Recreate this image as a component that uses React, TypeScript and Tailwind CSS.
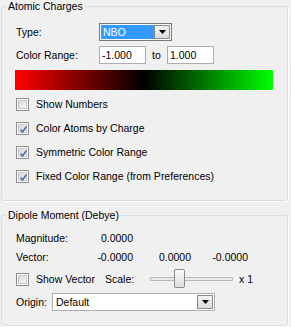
import React from "react";

const FONT = "font-['Liberation_Sans',Arial,sans-serif]";

const Arrow = () => (
  <svg width="7" height="4" viewBox="0 0 7 4">
    <path d="M0 0h7L3.5 4z" fill="#000" />
  </svg>
);

const DropButton = () => (
  <span className="w-[16px] h-full border border-[#8a8a8a] bg-[linear-gradient(#f2f2f2,#dcdcdc)] flex items-center justify-center shrink-0">
    <Arrow />
  </span>
);

const CheckBox = ({ checked }: { checked?: boolean }) => (
  <span className="w-[13px] h-[13px] border border-[#8e8f8f] bg-white p-[1px] shrink-0">
    <span className="block w-full h-full border border-[#c9c9c9] bg-[linear-gradient(135deg,#dadada,#f8f8f8)]">
      {checked && (
        <svg width="9" height="9" viewBox="0 0 9 9" className="block">
          <path d="M1.5 4.5 L3.5 7 L7.5 1.5" stroke="#4d6db5" strokeWidth="1.7" fill="none" />
        </svg>
      )}
    </span>
  </span>
);

const CheckRow = ({ label, checked }: { label: string; checked?: boolean }) => (
  <div className="h-[24px] flex items-center">
    <CheckBox checked={checked} />
    <span className="ml-[7px]">{label}</span>
  </div>
);

const TextBox = ({ value }: { value: string }) => (
  <div className="w-[47px] h-[18px] border border-[#abadb3] bg-white flex items-center px-[2px]">
    {value}
  </div>
);

export default function App() {
  return (
    <div className={`w-[291px] h-[327px] bg-[#f0f0f0] pl-[1px] text-[10.5px] leading-[13px] text-black ${FONT}`}>
      {/* Atomic Charges */}
      <fieldset className="block w-[287px] h-[201px] border border-[#d5dfe5] rounded-[3px] shadow-[1px_1px_0_#fff]">
        <legend className="ml-[5px] px-[1px] leading-[13px]">Atomic Charges</legend>
        <div className="flex flex-col pl-[14px]">
          <div className="mt-[10px] h-[18px] flex items-center">
            <span className="w-[83px]">Type:</span>
            <div className="w-[73px] h-[18px] border border-[#7a7a7a] bg-white flex p-[1px]">
              <div className="flex-1 bg-[#3399ff] text-white flex items-center pl-[2px]">NBO</div>
              <DropButton />
            </div>
          </div>
          <div className="mt-[5px] h-[18px] flex items-center">
            <span className="w-[83px]">Color Range:</span>
            <TextBox value="-1.000" />
            <span className="w-[21px] text-center">to</span>
            <TextBox value="1.000" />
          </div>
          <div className="mt-[6px] ml-[-1px] w-[258px] h-[20px] bg-[linear-gradient(to_right,#ff0000,#000000,#00ff00)]" />
          <div className="mt-[2px] flex flex-col">
            <CheckRow label="Show Numbers" />
            <CheckRow label="Color Atoms by Charge" checked />
            <CheckRow label="Symmetric Color Range" checked />
            <CheckRow label="Fixed Color Range (from Preferences)" checked />
          </div>
        </div>
      </fieldset>

      {/* Dipole Moment */}
      <fieldset className="block mt-[8px] w-[287px] h-[117px] border border-[#d5dfe5] rounded-[3px] shadow-[1px_1px_0_#fff]">
        <legend className="ml-[5px] px-[1px] leading-[13px]">Dipole Moment (Debye)</legend>
        <div className="flex flex-col pl-[14px]">
          <div className="mt-[8px] h-[16px] flex items-center">
            <span className="w-[68px]">Magnitude:</span>
            <span className="w-[49px] text-right">0.0000</span>
          </div>
          <div className="mt-[3px] h-[16px] flex items-center">
            <span className="w-[68px]">Vector:</span>
            <span className="w-[49px] text-right">-0.0000</span>
            <span className="w-[58px] text-right">0.0000</span>
            <span className="w-[57px] text-right">-0.0000</span>
          </div>
          <div className="mt-[4px] h-[20px] flex items-center">
            <div className="w-[89px] flex items-center">
              <CheckBox />
              <span className="ml-[7px]">Show Vector</span>
            </div>
            <span className="w-[45px]">Scale:</span>
            <div className="relative w-[83px] h-[20px] flex items-center">
              <div className="w-full h-[4px] border border-[#b8b8b8] bg-[#e7eaea] rounded-[1px]" />
              <div className="absolute left-[24px] top-[0px] w-[11px] h-[19px] border border-[#8a8a8a] rounded-[2px] bg-[linear-gradient(#fafafa,#dedede)]" />
            </div>
            <span className="ml-[6px]">x 1</span>
          </div>
          <div className="mt-[4px] h-[18px] flex items-center">
            <span className="w-[36px]">Origin:</span>
            <div className="w-[163px] h-[18px] border border-[#abadb3] bg-white flex p-[1px]">
              <div className="flex-1 flex items-center pl-[2px]">Default</div>
              <DropButton />
            </div>
          </div>
        </div>
      </fieldset>
    </div>
  );
}
